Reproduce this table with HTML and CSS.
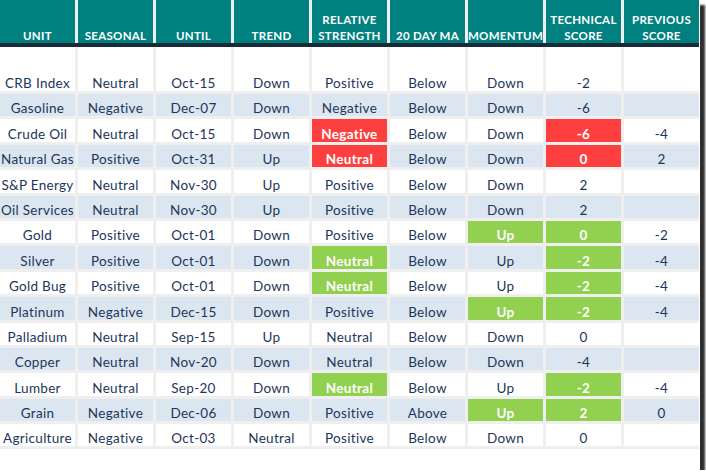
FILE: index.html
```html
<!DOCTYPE html>
<html>
<head>
<meta charset="utf-8">
<link rel="stylesheet" href="styles.css">
</head>
<body>
<div class="frame">
  <div class="sheet">
    <div class="head">
      <div class="th">UNIT</div>
      <div class="th">SEASONAL</div>
      <div class="th">UNTIL</div>
      <div class="th">TREND</div>
      <div class="th">RELATIVE<br>STRENGTH</div>
      <div class="th">20 DAY MA</div>
      <div class="th">MOMENTUM</div>
      <div class="th">TECHNICAL<br>SCORE</div>
      <div class="th">PREVIOUS<br>SCORE</div>
    </div>
    <div class="rule"></div>
    <div class="body">
      <div class="row first">
        <div class="c">CRB Index</div><div class="c">Neutral</div><div class="c">Oct-15</div><div class="c">Down</div><div class="c">Positive</div><div class="c">Below</div><div class="c">Down</div><div class="c">-2</div><div class="c"></div>
      </div>
      <div class="row alt">
        <div class="c">Gasoline</div><div class="c">Negative</div><div class="c">Dec-07</div><div class="c">Down</div><div class="c">Negative</div><div class="c">Below</div><div class="c">Down</div><div class="c">-6</div><div class="c"></div>
      </div>
      <div class="row">
        <div class="c">Crude Oil</div><div class="c">Neutral</div><div class="c">Oct-15</div><div class="c">Down</div><div class="c red">Negative</div><div class="c">Below</div><div class="c">Down</div><div class="c red">-6</div><div class="c">-4</div>
      </div>
      <div class="row alt">
        <div class="c">Natural Gas</div><div class="c">Positive</div><div class="c">Oct-31</div><div class="c">Up</div><div class="c red">Neutral</div><div class="c">Below</div><div class="c">Down</div><div class="c red">0</div><div class="c">2</div>
      </div>
      <div class="row">
        <div class="c">S&amp;P Energy</div><div class="c">Neutral</div><div class="c">Nov-30</div><div class="c">Up</div><div class="c">Positive</div><div class="c">Below</div><div class="c">Down</div><div class="c">2</div><div class="c"></div>
      </div>
      <div class="row alt">
        <div class="c">Oil Services</div><div class="c">Neutral</div><div class="c">Nov-30</div><div class="c">Up</div><div class="c">Positive</div><div class="c">Below</div><div class="c">Down</div><div class="c">2</div><div class="c"></div>
      </div>
      <div class="row">
        <div class="c">Gold</div><div class="c">Positive</div><div class="c">Oct-01</div><div class="c">Down</div><div class="c">Positive</div><div class="c">Below</div><div class="c green">Up</div><div class="c green">0</div><div class="c">-2</div>
      </div>
      <div class="row alt">
        <div class="c">Silver</div><div class="c">Positive</div><div class="c">Oct-01</div><div class="c">Down</div><div class="c green">Neutral</div><div class="c">Below</div><div class="c">Up</div><div class="c green">-2</div><div class="c">-4</div>
      </div>
      <div class="row">
        <div class="c">Gold Bug</div><div class="c">Positive</div><div class="c">Oct-01</div><div class="c">Down</div><div class="c green">Neutral</div><div class="c">Below</div><div class="c">Up</div><div class="c green">-2</div><div class="c">-4</div>
      </div>
      <div class="row alt">
        <div class="c">Platinum</div><div class="c">Negative</div><div class="c">Dec-15</div><div class="c">Down</div><div class="c">Positive</div><div class="c">Below</div><div class="c green">Up</div><div class="c green">-2</div><div class="c">-4</div>
      </div>
      <div class="row">
        <div class="c">Palladium</div><div class="c">Neutral</div><div class="c">Sep-15</div><div class="c">Up</div><div class="c">Neutral</div><div class="c">Below</div><div class="c">Down</div><div class="c">0</div><div class="c"></div>
      </div>
      <div class="row alt">
        <div class="c">Copper</div><div class="c">Neutral</div><div class="c">Nov-20</div><div class="c">Down</div><div class="c">Neutral</div><div class="c">Below</div><div class="c">Down</div><div class="c">-4</div><div class="c"></div>
      </div>
      <div class="row">
        <div class="c">Lumber</div><div class="c">Neutral</div><div class="c">Sep-20</div><div class="c">Down</div><div class="c green">Neutral</div><div class="c">Below</div><div class="c">Up</div><div class="c green">-2</div><div class="c">-4</div>
      </div>
      <div class="row alt">
        <div class="c">Grain</div><div class="c">Negative</div><div class="c">Dec-06</div><div class="c">Down</div><div class="c">Positive</div><div class="c">Above</div><div class="c green">Up</div><div class="c green">2</div><div class="c">0</div>
      </div>
      <div class="row">
        <div class="c">Agriculture</div><div class="c">Negative</div><div class="c">Oct-03</div><div class="c">Neutral</div><div class="c">Positive</div><div class="c">Below</div><div class="c">Down</div><div class="c">0</div><div class="c"></div>
      </div>
    </div>
  </div>
</div>
</body>
</html>
```

FILE: styles.css
```css
html, body {
  margin: 0;
  padding: 0;
  background: #ffffff;
}

.frame {
  width: 700px;
  height: 470px;
  background: #ffffff;
  box-shadow: 5px 5px 2px rgba(0, 0, 0, 0.82);
}

.sheet {
  width: 699px;
  background: #efefef;
  padding-bottom: 3px;
}

.head {
  display: grid;
  grid-template-columns: repeat(9, 75px);
  column-gap: 3px;
  height: 43px;
}

.th {
  background: #00807e;
  color: #ffffff;
  font-family: Lato, "Liberation Sans", sans-serif;
  font-weight: 700;
  font-size: 11.5px;
  letter-spacing: 0.3px;
  line-height: 16px;
  text-align: center;
  display: flex;
  align-items: flex-end;
  justify-content: center;
  padding-bottom: 0;
  margin-bottom: -1px;
}

.rule {
  height: 4px;
  background: #172a3a;
  position: relative;
}

.body {
  display: flex;
  flex-direction: column;
  gap: 3px;
}

.row {
  display: grid;
  grid-template-columns: repeat(9, 75px);
  column-gap: 3px;
  height: 22.4px;
}

.row.first {
  height: 44px;
}

.c {
  background: #ffffff;
  color: #1c365a;
  font-family: Lato, "Liberation Sans", sans-serif;
  font-size: 13.5px;
  letter-spacing: 0.3px;
  line-height: 15px;
  display: flex;
  align-items: flex-end;
  justify-content: center;
  padding-bottom: 0;
  white-space: nowrap;
}

.row.alt .c {
  background: #dce6f1;
}

.row .c.red {
  background: #fd3f3f;
  color: #ffffff;
  font-weight: 700;
}

.row .c.green {
  background: #92d050;
  color: #ffffff;
  font-weight: 700;
}
```
